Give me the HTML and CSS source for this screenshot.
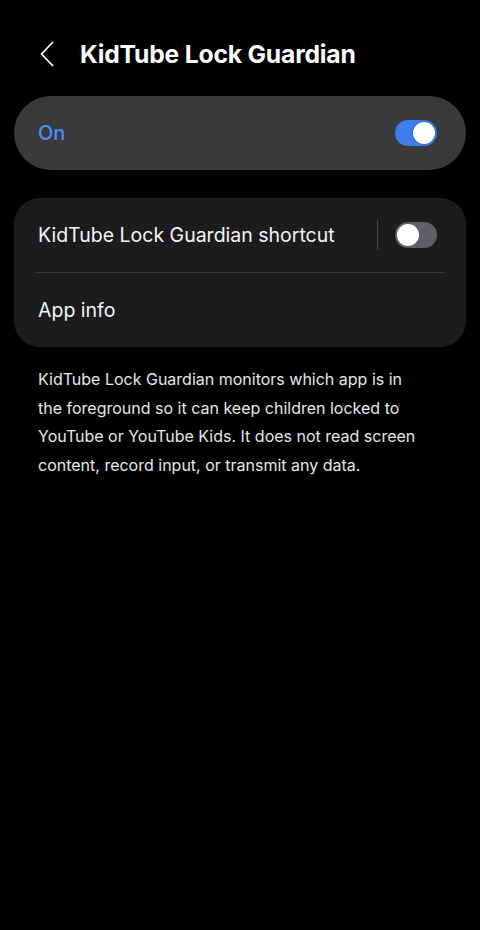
FILE: index.html
```html
<!DOCTYPE html>
<html>
<head>
	<title>KidTube Lock Guardian</title>
	<link rel="stylesheet" href="styles.css">
</head>
<body>
	<div class="screen">
		<div class="top-bar">
			<span class="back">
				<svg width="14" height="26" viewBox="0 0 14 26"><path d="M12.5 1.5 L1.5 13 L12.5 24.5" fill="none" stroke="#ffffff" stroke-width="1.8" stroke-linecap="round" stroke-linejoin="round"/></svg>
			</span>
			<h1>KidTube Lock Guardian</h1>
		</div>

		<div class="master-card">
			<span class="master-label">On</span>
			<span class="switch on"><span class="knob"></span></span>
		</div>

		<div class="list-card">
			<div class="row">
				<span class="row-label">KidTube Lock Guardian shortcut</span>
				<span class="row-divider"></span>
				<span class="switch off"><span class="knob"></span></span>
			</div>
			<div class="separator"></div>
			<div class="row">
				<span class="row-label">App info</span>
			</div>
		</div>

		<p class="description">KidTube Lock Guardian monitors which app is in the foreground so it can keep children locked to YouTube or YouTube Kids. It does not read screen content, record input, or transmit any data.</p>
	</div>
</body>
</html>
```

FILE: styles.css
```css
body {
	margin: 0;
	padding: 0;
	background-color: #000000;
	font-family: Inter, "Open Sans", sans-serif;
	color: #ffffff;
}

.screen {
	width: 480px;
	height: 930px;
	padding: 0 14px;
	box-sizing: border-box;
}

.top-bar {
	display: flex;
	align-items: center;
	height: 96px;
	padding-top: 12px;
	padding-left: 26px;
	box-sizing: border-box;
}

.back {
	display: flex;
	width: 14px;
	margin-right: 26px;
}

h1 {
	margin: 0;
	font-size: 24.7px;
	font-weight: 700;
	letter-spacing: -0.2px;
}

.master-card {
	display: flex;
	align-items: center;
	justify-content: space-between;
	height: 74px;
	border-radius: 37px;
	background-color: #3a3a3c;
	padding: 0 29px 0 24px;
}

.master-label {
	font-size: 20px;
	font-weight: 500;
	color: #4d8ef4;
}

.switch {
	position: relative;
	display: inline-block;
	width: 42px;
	height: 26px;
	border-radius: 13px;
	box-sizing: border-box;
	flex-shrink: 0;
}

.switch .knob {
	position: absolute;
	top: 2px;
	width: 22px;
	height: 22px;
	border-radius: 50%;
	background-color: #ffffff;
}

.switch.on {
	background-color: #3e7cf0;
}

.switch.on .knob {
	right: 2px;
	box-shadow: 0 0 0 1px #3068d0;
}

.switch.off {
	background-color: #606064;
}

.switch.off .knob {
	left: 2px;
}

.list-card {
	margin-top: 28px;
	background-color: #1c1c1e;
	border-radius: 26px;
	padding: 0 21px 0 21px;
}

.row {
	display: flex;
	align-items: center;
	height: 74px;
	padding-left: 3px;
	padding-right: 8px;
}

.row-label {
	flex-grow: 1;
	font-size: 19.5px;
	font-weight: 400;
	color: #f4f4f4;
}

.row-divider {
	width: 1px;
	height: 30px;
	background-color: #4a4a4c;
	margin-right: 17px;
}

.separator {
	height: 1px;
	background-color: #3a3a3c;
}

.description {
	margin: 18px 0 0 0;
	padding: 0 40px 0 24px;
	font-size: 16px;
	line-height: 28.5px;
	color: #e6e6e6;
}
```
